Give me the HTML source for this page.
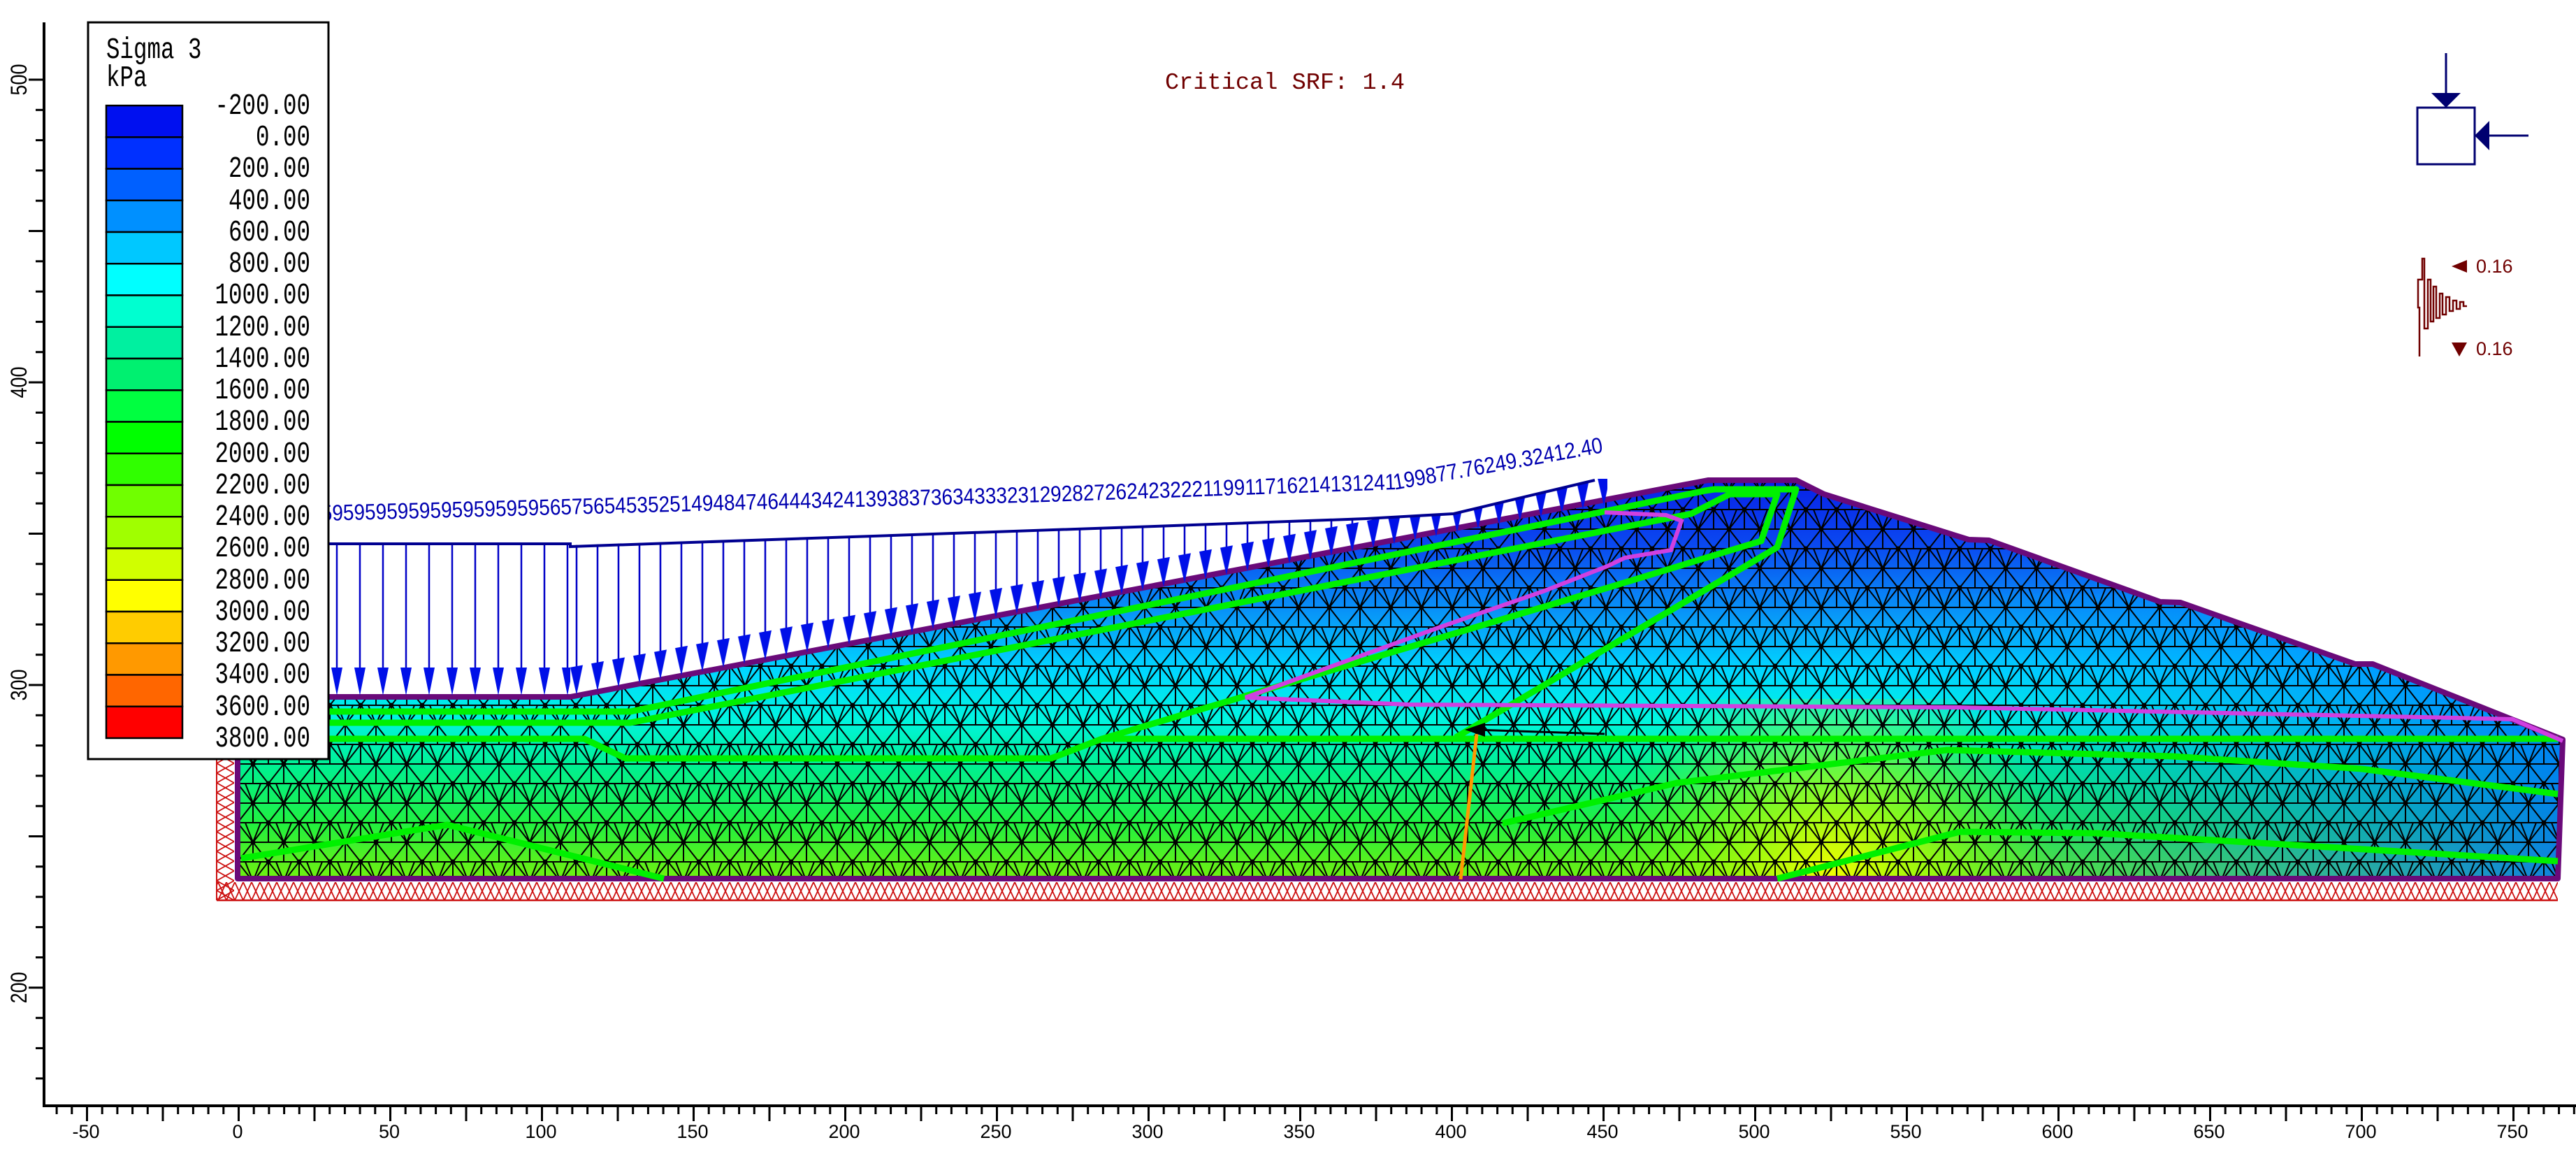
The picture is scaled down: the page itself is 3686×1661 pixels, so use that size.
<!DOCTYPE html>
<html><head><meta charset="utf-8"><style>
html,body{margin:0;padding:0;background:#fff;}
svg{display:block;}
.mono{font-family:"Liberation Mono",monospace;}
.sans{font-family:"Liberation Sans",sans-serif;}
</style></head><body>
<svg width="3686" height="1661" viewBox="0 0 3686 1661" xmlns="http://www.w3.org/2000/svg">
<defs>
<linearGradient id="gv" gradientUnits="userSpaceOnUse" x1="0" y1="687" x2="0" y2="1257">
<stop offset="0" stop-color="#0820e8"/>
<stop offset="0.16" stop-color="#0a48f0"/>
<stop offset="0.34" stop-color="#0898f8"/>
<stop offset="0.48" stop-color="#00d8ff"/>
<stop offset="0.6" stop-color="#00f4e0"/>
<stop offset="0.72" stop-color="#00f090"/>
<stop offset="0.86" stop-color="#20f040"/>
<stop offset="1" stop-color="#70f010"/>
</linearGradient>
<linearGradient id="gr" gradientUnits="userSpaceOnUse" x1="2700" y1="0" x2="3660" y2="0">
<stop offset="0" stop-color="#00a0ff" stop-opacity="0"/>
<stop offset="1" stop-color="#0070ff" stop-opacity="0.85"/>
</linearGradient>
<radialGradient id="gy" gradientUnits="userSpaceOnUse" cx="2620" cy="1250" r="320">
<stop offset="0" stop-color="#ffff00" stop-opacity="0.9"/>
<stop offset="0.5" stop-color="#c0ff00" stop-opacity="0.5"/>
<stop offset="1" stop-color="#80ff00" stop-opacity="0"/>
</radialGradient>
<pattern id="mesh" patternUnits="userSpaceOnUse" x="340" y="1" width="44" height="56">
<g stroke="#000" stroke-width="2" fill="none">
<path d="M0 0H44M0 28H44M0 56H44M0 0L22 28L44 0M0 56L22 28L44 56M22 28V56M0 0V28M44 0V28M11 0L22 28M33 0L22 28"/>
</g>
<circle cx="22" cy="28" r="3.5" fill="#000"/><circle cx="0" cy="0" r="3.5" fill="#000"/><circle cx="44" cy="0" r="3.5" fill="#000"/><circle cx="0" cy="56" r="3.5" fill="#000"/><circle cx="44" cy="56" r="3.5" fill="#000"/>
</pattern>
<pattern id="hatchB" patternUnits="userSpaceOnUse" x="0" y="1262" width="12" height="26">
<path d="M0 0L12 26M12 0L0 26" stroke="#cc1010" stroke-width="1.8" fill="none"/>
</pattern>
<pattern id="hatchL" patternUnits="userSpaceOnUse" x="310" y="0" width="25" height="14">
<path d="M0 0L25 14M25 0L0 14" stroke="#cc1010" stroke-width="1.8" fill="none"/>
</pattern>
<pattern id="varr" patternUnits="userSpaceOnUse" x="340" y="0" width="33" height="1661">
<line x1="10" y1="778" x2="10" y2="965" stroke="#0000c8" stroke-width="2.5"/>
<polygon points="2,955 18,955 10,995" fill="#0010e8"/>
</pattern>
<pattern id="sarr" patternUnits="userSpaceOnUse" x="0" y="0" width="30" height="4000" patternTransform="skewY(-10.43)">
<line x1="15" y1="0" x2="15" y2="1115" stroke="#0000c8" stroke-width="2.5"/>
<polygon points="6,1105 24,1105 15,1146" fill="#0010e8"/>
</pattern>
<pattern id="tx1" patternUnits="userSpaceOnUse" x="340" y="0" width="21.7" height="40"><rect x="0" y="0" width="3" height="40" fill="#000"/></pattern>
<pattern id="tx2" patternUnits="userSpaceOnUse" x="340" y="0" width="108.5" height="40"><rect x="0" y="0" width="3" height="40" fill="#000"/></pattern>
<pattern id="ty1" patternUnits="userSpaceOnUse" x="0" y="114" width="40" height="43.3"><rect x="0" y="-1.5" width="40" height="3" fill="#000"/><rect x="0" y="41.8" width="40" height="3" fill="#000"/></pattern>
<pattern id="ty2" patternUnits="userSpaceOnUse" x="0" y="114" width="40" height="216.5"><rect x="0" y="-1.5" width="40" height="3" fill="#000"/><rect x="0" y="215" width="40" height="3" fill="#000"/></pattern>
<clipPath id="dam"><polygon points="340,997 816,997 2444,687 2570,687 2610,707 2817,772 2846,773 3091,861 3120,862 3370,950 3395,950 3667,1058 3660,1257 340,1257"/></clipPath>
<clipPath id="sclip"><polygon points="816,780 1652,753 1955,742 2080,735 2282,685 2300,685 2300,728 816,1000"/></clipPath>
</defs>

<rect x="310" y="1262" width="3350" height="26" fill="url(#hatchB)"/>
<line x1="310" y1="1288" x2="3660" y2="1288" stroke="#cc1010" stroke-width="2.5"/>
<rect x="310" y="1000" width="25" height="288" fill="url(#hatchL)"/>
<line x1="310" y1="1000" x2="310" y2="1288" stroke="#cc1010" stroke-width="2"/>

<g clip-path="url(#dam)">
<rect x="330" y="680" width="3340" height="590" fill="url(#gv)"/>
<rect x="2700" y="850" width="970" height="420" fill="url(#gr)"/>
<rect x="2200" y="1000" width="900" height="270" fill="url(#gy)"/>
<rect x="330" y="680" width="3340" height="590" fill="url(#mesh)"/>
</g>
<polygon points="340,997 816,997 2444,687 2570,687 2610,707 2817,772 2846,773 3091,861 3120,862 3370,950 3395,950 3667,1058 3660,1257 340,1257" fill="none" stroke="#6a0a7a" stroke-width="8" stroke-linejoin="round"/>

<g fill="none" stroke="#00f000" stroke-width="9" stroke-linejoin="round">
<polyline points="340,1018 902,1018 2440,702 2453,700 2570,700 2543,783 2083,1055"/>
<polyline points="340,1034 902,1034 2420,735 2475,707 2543,707 2520,774 2300,841 1577,1057"/>
<polyline points="340,1057 836,1057 895,1085 1504,1085 1577,1057 3660,1057"/>
<polyline points="345,1228 640,1180 950,1257"/>
<polyline points="2543,1257 2804,1190 3000,1192 3300,1210 3660,1232"/>
<polyline points="2150,1178 2400,1120 2786,1073 3109,1082 3379,1100 3660,1136"/>
</g>
<polyline points="2296,733 2384,737 2406,745 2391,787 2325,798 2300,810 2208,846 2061,897 1782,998 2017,1008 2800,1012 3514,1027 3595,1029 3667,1060" fill="none" stroke="#d040e0" stroke-width="6"/>
<line x1="2113" y1="1050" x2="2090" y2="1258" stroke="#ff9900" stroke-width="5"/>
<line x1="2296" y1="1050" x2="2110" y2="1044" stroke="#000" stroke-width="3"/>
<polygon points="2096,1044 2125,1034 2125,1054" fill="#000"/>

<rect x="340" y="778" width="476" height="220" fill="url(#varr)"/>
<rect x="800" y="680" width="1510" height="330" fill="url(#sarr)" clip-path="url(#sclip)"/>
<polyline points="340,778 816,778 816,782 1652,753 1955,742 2080,735 2282,687" fill="none" stroke="#000090" stroke-width="4"/>
<path id="tp" d="M460,745 L1500,718 L2000,700 L2290,648" fill="none"/>
<text class="sans" font-size="32" fill="#0000b0"><textPath href="#tp" textLength="1840" lengthAdjust="spacingAndGlyphs">595959595959595959595657565453525149484746444342413938373634333231292827262423222119911716214131241199877.76249.32412.40</textPath></text>

<rect x="61" y="32" width="4" height="1552" fill="#000"/>
<rect x="61" y="1580" width="3625" height="4" fill="#000"/>
<rect x="63" y="1584" width="3623" height="10" fill="url(#tx1)"/>
<rect x="63" y="1584" width="3623" height="20" fill="url(#tx2)"/>
<rect x="51" y="140" width="10" height="1440" fill="url(#ty1)"/>
<rect x="41" y="100" width="20" height="1480" fill="url(#ty2)"/>
<g class="sans" font-size="27" fill="#000" text-anchor="middle">
<text transform="translate(38,114) rotate(-90) scale(1,1.2)">500</text>
<text transform="translate(38,547) rotate(-90) scale(1,1.2)">400</text>
<text transform="translate(38,980) rotate(-90) scale(1,1.2)">300</text>
<text transform="translate(38,1413) rotate(-90) scale(1,1.2)">200</text>
</g>
<g class="sans" font-size="27" fill="#000" text-anchor="middle">
<text x="123" y="1628">-50</text><text x="340" y="1628">0</text><text x="557" y="1628">50</text><text x="774" y="1628">100</text><text x="991" y="1628">150</text><text x="1208" y="1628">200</text><text x="1425" y="1628">250</text><text x="1642" y="1628">300</text><text x="1859" y="1628">350</text><text x="2076" y="1628">400</text><text x="2293" y="1628">450</text><text x="2510" y="1628">500</text><text x="2727" y="1628">550</text><text x="2944" y="1628">600</text><text x="3161" y="1628">650</text><text x="3378" y="1628">700</text><text x="3595" y="1628">750</text>
</g>

<rect x="126" y="32" width="344" height="1054" fill="#fff" stroke="#000" stroke-width="3"/>
<g class="mono" font-size="32.5" fill="#000">
<text transform="translate(152,83) scale(1,1.3)">Sigma 3</text>
<text transform="translate(152,123) scale(1,1.3)">kPa</text>
</g>
<g stroke="#000" stroke-width="2.5">
<rect x="152" y="151" width="109" height="45.25" fill="#0010f0"/>
<rect x="152" y="196.25" width="109" height="45.25" fill="#0030ff"/>
<rect x="152" y="241.5" width="109" height="45.25" fill="#0060ff"/>
<rect x="152" y="286.75" width="109" height="45.25" fill="#0090ff"/>
<rect x="152" y="332" width="109" height="45.25" fill="#00c8ff"/>
<rect x="152" y="377.25" width="109" height="45.25" fill="#00ffff"/>
<rect x="152" y="422.5" width="109" height="45.25" fill="#00ffd0"/>
<rect x="152" y="467.75" width="109" height="45.25" fill="#00f0a0"/>
<rect x="152" y="513" width="109" height="45.25" fill="#00f070"/>
<rect x="152" y="558.25" width="109" height="45.25" fill="#00ff40"/>
<rect x="152" y="603.5" width="109" height="45.25" fill="#00ff00"/>
<rect x="152" y="648.75" width="109" height="45.25" fill="#30ff00"/>
<rect x="152" y="694" width="109" height="45.25" fill="#70ff00"/>
<rect x="152" y="739.25" width="109" height="45.25" fill="#a0ff00"/>
<rect x="152" y="784.5" width="109" height="45.25" fill="#d0ff00"/>
<rect x="152" y="829.75" width="109" height="45.25" fill="#ffff00"/>
<rect x="152" y="875" width="109" height="45.25" fill="#ffcc00"/>
<rect x="152" y="920.25" width="109" height="45.25" fill="#ff9900"/>
<rect x="152" y="965.5" width="109" height="45.25" fill="#ff6600"/>
<rect x="152" y="1010.75" width="109" height="45.25" fill="#ff0000"/>
</g>
<g class="mono" font-size="32.5" fill="#000" text-anchor="end">
<text transform="translate(444,163) scale(1,1.3)">-200.00</text>
<text transform="translate(444,208) scale(1,1.3)">0.00</text>
<text transform="translate(444,253) scale(1,1.3)">200.00</text>
<text transform="translate(444,299) scale(1,1.3)">400.00</text>
<text transform="translate(444,344) scale(1,1.3)">600.00</text>
<text transform="translate(444,389) scale(1,1.3)">800.00</text>
<text transform="translate(444,434) scale(1,1.3)">1000.00</text>
<text transform="translate(444,480) scale(1,1.3)">1200.00</text>
<text transform="translate(444,525) scale(1,1.3)">1400.00</text>
<text transform="translate(444,570) scale(1,1.3)">1600.00</text>
<text transform="translate(444,615) scale(1,1.3)">1800.00</text>
<text transform="translate(444,661) scale(1,1.3)">2000.00</text>
<text transform="translate(444,706) scale(1,1.3)">2200.00</text>
<text transform="translate(444,751) scale(1,1.3)">2400.00</text>
<text transform="translate(444,796) scale(1,1.3)">2600.00</text>
<text transform="translate(444,842) scale(1,1.3)">2800.00</text>
<text transform="translate(444,887) scale(1,1.3)">3000.00</text>
<text transform="translate(444,932) scale(1,1.3)">3200.00</text>
<text transform="translate(444,977) scale(1,1.3)">3400.00</text>
<text transform="translate(444,1023) scale(1,1.3)">3600.00</text>
<text transform="translate(444,1068) scale(1,1.3)">3800.00</text>
</g>

<text class="mono" x="1667" y="127" font-size="33" fill="#700000" textLength="343" lengthAdjust="spacingAndGlyphs">Critical SRF: 1.4</text>

<rect x="3459" y="154" width="82" height="81" fill="#fff" stroke="#000070" stroke-width="3"/>
<line x1="3500" y1="76" x2="3500" y2="138" stroke="#000070" stroke-width="3"/>
<polygon points="3479,133 3521,133 3500,154" fill="#000070"/>
<line x1="3618" y1="194" x2="3555" y2="194" stroke="#000070" stroke-width="3"/>
<polygon points="3541,194 3562,173 3562,215" fill="#000070"/>
<path d="M3462,510 L3462,440 L3460,440 L3460,400 L3466,400 L3466,370 L3469,370 L3469,470 L3474,470 L3474,400 L3478,400 L3478,460 L3482,460 L3482,410 L3486,410 L3486,455 L3491,455 L3491,420 L3495,420 L3495,450 L3500,450 L3500,425 L3505,425 L3505,445 L3510,445 L3510,430 L3515,430 L3515,442 L3520,442 L3520,432 L3525,432 L3525,438 L3530,438" fill="none" stroke="#700000" stroke-width="2.5"/>
<polygon points="3508,381 3530,372 3530,390" fill="#700000"/>
<polygon points="3508,490 3530,490 3519,510" fill="#700000"/>
<g class="sans" font-size="27" fill="#700000">
<text x="3543" y="390">0.16</text>
<text x="3543" y="508">0.16</text>
</g>
</svg>
</body></html>
